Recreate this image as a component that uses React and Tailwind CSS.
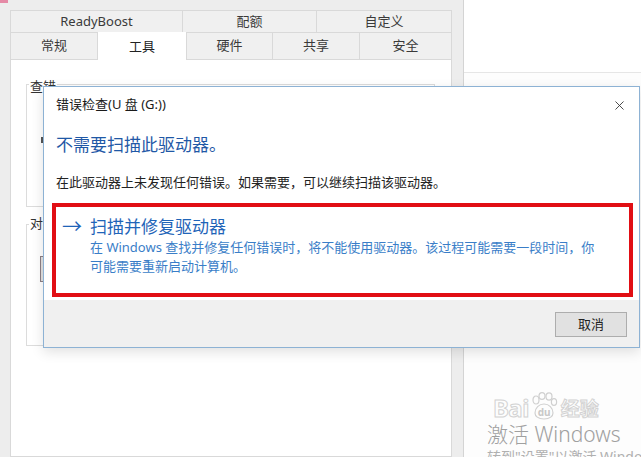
import { X } from "lucide-react";

const font = "font-['Noto_Sans','Noto_Sans_CJK_SC',sans-serif]";

const topTabs = [
  { label: "ReadyBoost", w: "w-[173px]" },
  { label: "配额", w: "w-[135px]" },
  { label: "自定义", w: "flex-1" },
];

const bottomTabs = [
  { label: "常规", w: "w-[88px]" },
  { label: "工具", w: "w-[90px]", active: true },
  { label: "硬件", w: "w-[87px]" },
  { label: "共享", w: "w-[88px]" },
  { label: "安全", w: "flex-1" },
];

function BaiduMark() {
  return (
    <div className="flex items-end h-[28px] gap-[1px] leading-none">
      <span className="text-[24px] leading-[24px] font-bold tracking-tight text-transparent [-webkit-text-stroke:1px_#d2d2d2]">
        Bai
      </span>
      <div className="relative w-[28px] h-[28px]">
        <svg width="28" height="28" viewBox="0 0 28 28" fill="none" stroke="#d0d0d0" strokeWidth="1.2">
          <ellipse cx="6" cy="8" rx="3" ry="4" />
          <ellipse cx="12" cy="4" rx="3" ry="3.4" />
          <ellipse cx="19" cy="4.5" rx="3" ry="3.6" />
          <ellipse cx="24" cy="10" rx="2.6" ry="3.4" />
          <path d="M5 21c0-5 4-9 9-9s9 4 9 9c0 3-3 6-9 6s-9-3-9-6z" />
        </svg>
        <span className="absolute left-[8px] top-[15px] text-[10px] leading-[10px] font-bold text-[#c8c8c8]">du</span>
      </div>
      <span className="ml-[2px] text-[19px] leading-[22px] font-bold text-transparent [-webkit-text-stroke:1px_#d2d2d2]">
        经验
      </span>
    </div>
  );
}

export default function App() {
  return (
    <div className={`relative w-[641px] h-[457px] overflow-hidden bg-white ${font}`}>
      <div className="flex h-full">
        {/* properties window */}
        <div className="w-[464px] h-full bg-[#ededed] border-r border-[#d4d4d4] pl-[10px] pt-[10px] pr-[11px] flex flex-col">
          <div className="flex h-[23px] text-[13px] text-[#3a3a3a]">
            {topTabs.map((t) => (
              <div
                key={t.label}
                className={`${t.w} flex items-center justify-center bg-[#f0f0f0] border border-[#d9d9d9] -ml-px first:ml-0`}
              >
                {t.label}
              </div>
            ))}
          </div>
          <div className="flex h-[27px] text-[13px] text-[#3a3a3a]">
            {bottomTabs.map((t) => (
              <div
                key={t.label}
                className={`${t.w} flex items-center justify-center -ml-px first:ml-0 border border-t-0 border-[#d9d9d9] ${
                  t.active ? "bg-white border-b-0 -mt-[1px] pt-[1px] z-10 text-[#222]" : "bg-[#f0f0f0]"
                }`}
              >
                {t.label}
              </div>
            ))}
          </div>
          <div className="flex-1 bg-white border border-[#d9d9d9] -mt-px pl-[15px] pt-[24px] pr-[16px] flex flex-col">
            {/* 查错 group */}
            <div className="relative h-[123px] border border-[#dcdcdc]">
              <span className="absolute left-[2px] -top-[5px] bg-white px-[1px] text-[13px] text-[#333] leading-none">
                查错
              </span>
              <div className="mt-[52px] ml-[14px] w-[2px] h-[6px] bg-[#555]" />
            </div>
            {/* 对驱动器进行优化 group */}
            <div className="relative mt-[17px] h-[122px] border border-[#dcdcdc]">
              <span className="absolute left-[2px] -top-[8px] bg-white px-[1px] text-[13px] text-[#333] leading-none">
                对
              </span>
              <div className="mt-[31px] ml-[13px] w-[60px] h-[26px] bg-[#e1e1e1] border border-[#8c7f86]" />
            </div>
          </div>
        </div>
        {/* window behind, right */}
        <div className="flex-1 flex flex-col bg-white">
          <div className="h-[73px] border-b border-[#e6e6e6]" />
          <div className="flex-1 bg-[#fdfdfd]" />
        </div>
      </div>

      <div className="absolute left-0 top-0 w-[8px] h-[3px] bg-[#e58aa6]" />

      {/* error check dialog */}
      <div className="absolute left-[43px] top-[86px] w-[597px] h-[262px] bg-white border border-[#8db2d4] shadow-[0_4px_12px_rgba(0,0,0,0.12)] flex flex-col">
        <div className="h-[36px] flex items-center justify-between pl-[12px] pr-[12px] text-[13px] text-[#1a1a1a]">
          <span>错误检查(U 盘 (G:))</span>
          <X size={15} strokeWidth={1.4} className="text-[#333]" />
        </div>
        <div className="flex-1 flex flex-col">
          <div className="pl-[12px] mt-[10px] text-[17px] leading-[24px] text-[#1f58a6]">不需要扫描此驱动器。</div>
          <div className="pl-[12px] mt-[15px] text-[13px] leading-[20px] text-[#222]">
            在此驱动器上未发现任何错误。如果需要，可以继续扫描该驱动器。
          </div>
          <div className="ml-[8px] mr-[6px] mt-[11px] h-[94px] border-[4px] border-[#e10e14] flex pt-[9px]">
            <span className="w-[34px] pl-[6px] text-[20px] leading-[22px] text-[#1f64b8]">→</span>
            <div className="flex flex-col">
              <span className="text-[17px] leading-[22px] text-[#1f64b8]">扫描并修复驱动器</span>
              <span className="text-[13px] leading-[19px] text-[#3a7ec8]">
                在 Windows 查找并修复任何错误时，将不能使用驱动器。该过程可能需要一段时间，你
              </span>
              <span className="text-[13px] leading-[19px] text-[#3a7ec8]">可能需要重新启动计算机。</span>
            </div>
          </div>
        </div>
        <div className="h-[47px] bg-[#f0f0f0] flex justify-end items-start pt-[12px] pr-[12px]">
          <button className="w-[72px] h-[25px] bg-[#e1e1e1] border border-[#adadad] text-[13px] text-[#222]">
            取消
          </button>
        </div>
      </div>

      {/* watermark */}
      <div className="absolute left-[487px] top-[392px] flex flex-col">
        <div className="ml-[6px]">
          <BaiduMark />
        </div>
        <span className="text-[21px] leading-[28px] font-light text-[#a0a0a0] whitespace-nowrap">激活 Windows</span>
        <span className="text-[14px] leading-[18px] text-[#b0b0b0] whitespace-nowrap">转到"设置"以激活 Windows。</span>
      </div>
    </div>
  );
}
